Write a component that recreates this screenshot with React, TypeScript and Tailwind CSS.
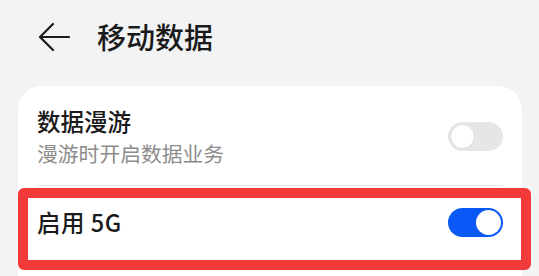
function Toggle({ on }: { on: boolean }) {
  return on ? (
    <div className="flex h-[29px] w-[55px] items-center justify-end rounded-full bg-[#0a59f7] px-[2px]">
      <div className="h-[25px] w-[25px] rounded-full bg-white" />
    </div>
  ) : (
    <div className="flex h-[29px] w-[55px] items-center rounded-full bg-[#e6e6e6] px-[2px]">
      <div className="h-[25px] w-[25px] rounded-full border border-[#dcdcdc] bg-white" />
    </div>
  );
}

export default function App() {
  return (
    <div
      className="relative h-[276px] w-[539px] overflow-hidden bg-[#f1f3f5]"
      style={{ fontFamily: '"Noto Sans CJK SC", "Noto Sans", sans-serif' }}
    >
      <div className="flex h-[86px] items-start pl-[38px] pt-[17px]">
        <svg width="32" height="32" viewBox="0 0 32 32" fill="none" className="mt-[3px]">
          <path d="M31 17H2M15 4 2 17l13 13" stroke="#1a1a1a" strokeWidth="2.2" strokeLinecap="round" strokeLinejoin="round" />
        </svg>
        <h1 className="ml-[27px] text-[29px] font-medium leading-[38px] text-[#1a1a1a]">移动数据</h1>
      </div>

      <div className="ml-[18px] h-[200px] w-[504px] rounded-t-[24px] bg-white px-[19px]">
        <div className="flex h-[100px] items-center justify-between border-b border-[#e8e8e8] pt-[2px]">
          <div className="flex flex-col">
            <span className="text-[23.5px] font-medium leading-[33px] text-[#1a1a1a]">数据漫游</span>
            <span className="text-[20.8px] leading-[30px] text-[#8c8c8c]">漫游时开启数据业务</span>
          </div>
          <Toggle on={false} />
        </div>
        <div className="flex h-[72px] items-center justify-between">
          <span className="text-[23.5px] font-medium leading-[32px] tracking-[0.5px] text-[#1a1a1a]">启用 5G</span>
          <Toggle on />
        </div>
      </div>

      <div className="absolute left-[18px] top-[188px] h-[82px] w-[513px] rounded-[6px] border-[10px] border-[#f23a3a]" />
    </div>
  );
}
